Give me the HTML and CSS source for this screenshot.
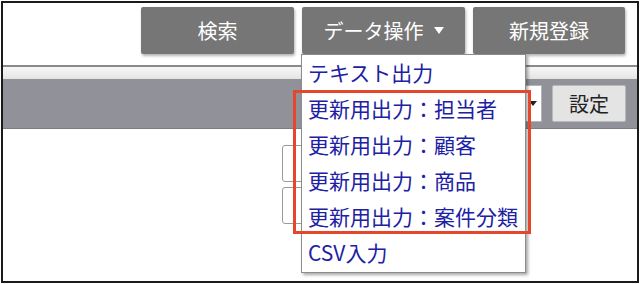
FILE: index.html
```html
<!DOCTYPE html>
<html>

<head>
  <meta charset="utf-8">
  <link rel="stylesheet" href="styles.css">
</head>

<body>
  <div class="frame">
    <div class="toolbar">
      <button class="tool-btn search-btn">検索</button>
      <div class="data-menu">
        <button class="tool-btn data-btn">
          データ操作
          <svg class="caret" viewBox="0 0 10 7">
            <path d="M0 0h10L5 7z" />
          </svg>
        </button>
        <ul class="dropdown">
          <li class="dropdown-item">テキスト出力</li>
          <li class="dropdown-item">更新用出力：担当者</li>
          <li class="dropdown-item">更新用出力：顧客</li>
          <li class="dropdown-item">更新用出力：商品</li>
          <li class="dropdown-item">更新用出力：案件分類</li>
          <li class="dropdown-item">CSV入力</li>
        </ul>
      </div>
      <button class="tool-btn new-btn">新規登録</button>
    </div>

    <div class="divider"></div>

    <div class="filter-bar">
      <div class="select-box">
        <svg class="select-caret" viewBox="0 0 8 5">
          <path d="M0 0h8L4 5z" />
        </svg>
      </div>
      <button class="setting-btn">設定</button>
    </div>

    <div class="form-area">
      <div class="field"></div>
      <div class="field"></div>
    </div>

    <div class="highlight"></div>
  </div>
</body>

</html>
```

FILE: styles.css
```css
* {
  box-sizing: border-box;
  margin: 0;
  padding: 0;
}

body {
  width: 640px;
  height: 284px;
  font-family: "Noto Sans CJK JP", "Liberation Sans", sans-serif;
  background: #fff;
  overflow: hidden;
}

.frame {
  position: relative;
  margin: 1px;
  width: 638px;
  height: 282px;
  border: 2px solid #1a1a1a;
  background: #fff;
}

.toolbar {
  display: flex;
  justify-content: flex-end;
  gap: 8px;
  padding: 4px 12px 0 0;
}

.tool-btn {
  height: 47px;
  border: none;
  border-radius: 2px;
  background: #767676;
  color: #fff;
  font-family: inherit;
  font-size: 20px;
  display: flex;
  align-items: center;
  justify-content: center;
  gap: 10px;
  box-shadow: 1px 2px 3px rgba(0, 0, 0, 0.3);
}

.search-btn {
  width: 153px;
}

.data-btn {
  width: 163px;
}

.new-btn {
  width: 152px;
}

.caret {
  width: 10px;
  height: 7px;
  fill: #fff;
}

.data-menu {
  position: relative;
}

.dropdown {
  position: absolute;
  top: 47px;
  left: -1px;
  width: 225px;
  list-style: none;
  background: #fff;
  border: 1px solid #8c8c8c;
  box-shadow: 2px 2px 3px rgba(0, 0, 0, 0.35);
  padding-bottom: 1px;
  z-index: 10;
}

.dropdown-item {
  height: 36px;
  line-height: 34px;
  padding-left: 6px;
  font-size: 21px;
  color: #2020a4;
  white-space: nowrap;
}

.divider {
  margin-top: 11px;
  height: 14px;
  border-top: 2px solid #8a8a8a;
  background: linear-gradient(#f7f7f7, #e4e4e4);
}

.filter-bar {
  height: 50px;
  background: #919199;
  border-bottom: 1px solid #7b7b82;
  display: flex;
  justify-content: flex-end;
  align-items: center;
  gap: 10px;
  padding-right: 11px;
}

.select-box {
  width: 62px;
  height: 37px;
  background: #fff;
  border: 1px solid #b5b5b5;
  display: flex;
  align-items: center;
  justify-content: flex-end;
  padding-right: 4px;
}

.select-caret {
  width: 8px;
  height: 5px;
  fill: #222;
}

.setting-btn {
  width: 74px;
  height: 37px;
  background: #e4e4e4;
  border: 1px solid #b9b9b9;
  border-radius: 2px;
  font-family: inherit;
  font-size: 20px;
  color: #222;
}

.form-area {
  display: flex;
  flex-direction: column;
  gap: 5px;
  padding: 16px 0 0 279px;
}

.field {
  width: 120px;
  height: 37px;
  border: 1px solid #9a9a9a;
  border-radius: 3px;
}

.highlight {
  position: absolute;
  left: 290px;
  top: 87px;
  width: 238px;
  height: 144px;
  border: 3px solid #e5472d;
  z-index: 20;
}
```
